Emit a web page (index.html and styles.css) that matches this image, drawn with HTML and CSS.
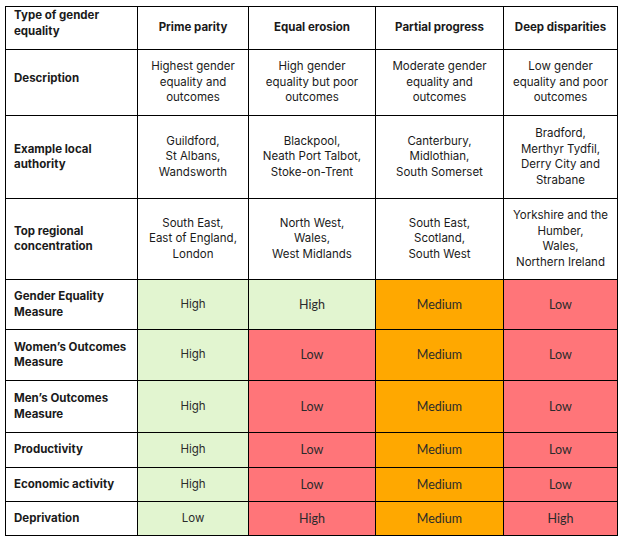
FILE: index.html
```html
<!DOCTYPE html>
<html>
<head>
<meta charset="utf-8">
<link rel="stylesheet" href="styles.css">
</head>
<body>
<table class="grid">
  <colgroup>
    <col class="c0"><col class="c1"><col class="c2"><col class="c3"><col class="c4">
  </colgroup>
  <tr class="r-head">
    <th class="label top">Type of gender equality</th>
    <th>Prime parity</th>
    <th>Equal erosion</th>
    <th>Partial progress</th>
    <th>Deep disparities</th>
  </tr>
  <tr class="r-desc">
    <th class="label raised">Description</th>
    <td>Highest gender equality and outcomes</td>
    <td>High gender equality but poor outcomes</td>
    <td>Moderate gender equality and outcomes</td>
    <td>Low gender equality and poor outcomes</td>
  </tr>
  <tr class="r-la">
    <th class="label">Example local authority</th>
    <td>Guildford,<br>St Albans,<br>Wandsworth</td>
    <td>Blackpool,<br>Neath Port Talbot,<br>Stoke-on-Trent</td>
    <td>Canterbury,<br>Midlothian,<br>South Somerset</td>
    <td>Bradford,<br>Merthyr Tydfil,<br>Derry City and Strabane</td>
  </tr>
  <tr class="r-reg">
    <th class="label">Top regional concentration</th>
    <td>South East,<br>East of England,<br>London</td>
    <td>North West,<br>Wales,<br>West Midlands</td>
    <td>South East,<br>Scotland,<br>South West</td>
    <td>Yorkshire and the Humber,<br>Wales,<br>Northern Ireland</td>
  </tr>
  <tr class="r-m1">
    <th class="label">Gender Equality Measure</th>
    <td class="hi first">High</td>
    <td class="hi">High</td>
    <td class="med">Medium</td>
    <td class="lo">Low</td>
  </tr>
  <tr class="r-m2">
    <th class="label">Women’s Outcomes Measure</th>
    <td class="hi first">High</td>
    <td class="lo">Low</td>
    <td class="med">Medium</td>
    <td class="lo">Low</td>
  </tr>
  <tr class="r-m3">
    <th class="label">Men’s Outcomes Measure</th>
    <td class="hi first">High</td>
    <td class="lo">Low</td>
    <td class="med">Medium</td>
    <td class="lo">Low</td>
  </tr>
  <tr class="r-s1">
    <th class="label">Productivity</th>
    <td class="hi first">High</td>
    <td class="lo">Low</td>
    <td class="med">Medium</td>
    <td class="lo">Low</td>
  </tr>
  <tr class="r-s2">
    <th class="label">Economic activity</th>
    <td class="hi first">High</td>
    <td class="lo">Low</td>
    <td class="med">Medium</td>
    <td class="lo">Low</td>
  </tr>
  <tr class="r-s3">
    <th class="label">Deprivation</th>
    <td class="hi first">Low</td>
    <td class="lo">High</td>
    <td class="med">Medium</td>
    <td class="lo">High</td>
  </tr>
</table>
</body>
</html>
```

FILE: styles.css
```css
html, body {
  margin: 0;
  padding: 0;
  background: #ffffff;
}
body {
  padding: 6px 0 0 5px;
  font-family: "Inter", "Noto Sans", sans-serif;
  color: #1a1a1a;
}
.grid {
  border-collapse: collapse;
  table-layout: fixed;
  width: 613px;
  font-size: 11.5px;
  line-height: 15.5px;
}
.c0 { width: 132px; }
.c1 { width: 111px; }
.c2 { width: 127px; }
.c3 { width: 128px; }
.c4 { width: 114px; }
.grid th, .grid td {
  border: 1px solid #000;
  padding: 0 8px;
  text-align: center;
  vertical-align: middle;
  font-weight: 400;
}
.grid th {
  font-weight: 700;
}
.grid th.label {
  text-align: left;
  padding-left: 8px;
}
.grid th.top {
  vertical-align: top;
  padding-top: 1px;
}
.grid th.raised {
  padding-bottom: 7px;
}
.r-head { height: 43px; }
.r-desc { height: 66px; }
.r-la { height: 83px; }
.r-reg { height: 81px; }
.r-m1 { height: 50px; }
.r-m2 { height: 51px; }
.r-m3 { height: 52px; }
.r-s1 { height: 35px; }
.r-s2 { height: 34px; }
.r-s3 { height: 34px; }
.hi { background: #e2f5d0; }
.med { background: #ffa800; }
.lo { background: #ff7579; }
.hi, .med, .lo {
  font-family: "Lato", "Open Sans", sans-serif;
  font-size: 12.5px;
  color: #2b2b2b;
}
.hi.first {
  font-family: "Inter", "Noto Sans", sans-serif;
  font-size: 11.5px;
}
```
